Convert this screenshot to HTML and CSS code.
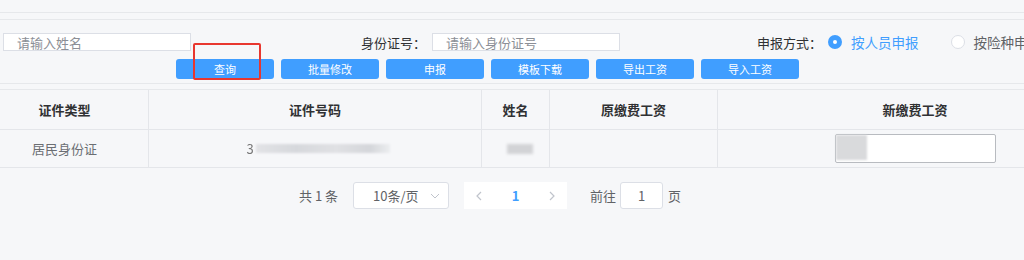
FILE: index.html
```html
<!DOCTYPE html>
<html lang="zh-CN">
<head>
    <meta charset="UTF-8">
    <meta name="viewport" content="width=device-width, initial-scale=1.0">
    <title>缴费工资调整</title>
    <link rel="stylesheet" href="styles.css">
</head>
<body>
    <div class="page">
        <div class="top-strip"></div>
        <div class="top-gap"></div>

        <div class="filters">
            <div class="filter-row">
                <input type="text" class="text-input name-input" placeholder="请输入姓名">
                <div class="field id-field">
                    <span class="field-label">身份证号：</span>
                    <input type="text" class="text-input" placeholder="请输入身份证号">
                </div>
                <div class="field type-field">
                    <span class="field-label">申报方式：</span>
                    <label class="radio checked"><span class="radio-dot"></span>按人员申报</label>
                    <label class="radio"><span class="radio-dot"></span>按险种申报</label>
                </div>
            </div>
            <div class="button-row">
                <button class="btn">查询</button>
                <button class="btn">批量修改</button>
                <button class="btn">申报</button>
                <button class="btn">模板下载</button>
                <button class="btn">导出工资</button>
                <button class="btn">导入工资</button>
            </div>
            <div class="highlight-box"></div>
        </div>
        <div class="mid-gap"></div>

        <div class="table-wrap">
            <table class="data-table">
                <thead>
                    <tr>
                        <th class="col-type">证件类型</th>
                        <th class="col-no">证件号码</th>
                        <th class="col-name">姓名</th>
                        <th class="col-old">原缴费工资</th>
                        <th class="col-new">新缴费工资</th>
                    </tr>
                </thead>
                <tbody>
                    <tr>
                        <td>居民身份证</td>
                        <td><span class="blur-no"><span class="blur-first">3</span><span class="blur-bar"></span></span></td>
                        <td><span class="blur-name"></span></td>
                        <td></td>
                        <td>
                            <div class="salary-input">
                                <span class="blur-salary"></span>
                            </div>
                        </td>
                    </tr>
                </tbody>
            </table>
        </div>

        <div class="pagination">
            <span class="total">共 1 条</span>
            <div class="page-size">
                <span>10条/页</span>
                <svg class="arrow-down" width="10" height="6" viewBox="0 0 10 6">
                    <path d="M1 1 L5 5 L9 1" fill="none" stroke="#c0c4cc" stroke-width="1"/>
                </svg>
            </div>
            <div class="pager">
                <span class="pager-btn">
                    <svg width="6" height="10" viewBox="0 0 6 10"><path d="M5 1 L1 5 L5 9" fill="none" stroke="#c0c4cc" stroke-width="1.2"/></svg>
                </span>
                <span class="pager-num">1</span>
                <span class="pager-btn">
                    <svg width="6" height="10" viewBox="0 0 6 10"><path d="M1 1 L5 5 L1 9" fill="none" stroke="#c0c4cc" stroke-width="1.2"/></svg>
                </span>
            </div>
            <span class="jump-label">前往</span>
            <div class="jump-input">1</div>
            <span class="jump-label">页</span>
        </div>
    </div>
</body>
</html>
```

FILE: styles.css
```css
body {
    margin: 0;
    background-color: #f6f7f9;
    font-family: "Noto Sans CJK SC", "Noto Sans", sans-serif;
    color: #333;
    overflow: hidden;
}
.page {
    width: 1024px;
    overflow: hidden;
}
.top-strip {
    height: 12px;
    border-bottom: 1px solid #e6e8eb;
}
.top-gap {
    height: 6px;
    border-bottom: 1px solid #e6e8eb;
}
.filters {
    position: relative;
    padding: 13px 0 4px 0;
    border-bottom: 1px solid #e6e8eb;
}
.filter-row {
    display: flex;
    align-items: center;
    height: 18px;
    white-space: nowrap;
}
.filter-row > *,
.field > * {
    flex-shrink: 0;
}
.text-input {
    box-sizing: border-box;
    width: 188px;
    height: 18px;
    padding: 0 0 0 13px;
    border: 1px solid #dcdfe6;
    background: white;
    font-family: inherit;
    font-size: 13px;
    color: #606266;
    outline: none;
}
.text-input::placeholder {
    color: #8c8f96;
}
.name-input {
    margin-left: 3px;
}
.field {
    display: flex;
    align-items: center;
}
.field-label {
    font-size: 13px;
    color: #303133;
    margin-right: 6px;
}
.id-field {
    margin-left: 170px;
}
.type-field {
    margin-left: 137px;
}
.radio {
    display: flex;
    align-items: center;
    font-size: 13.5px;
    color: #606266;
    margin-right: 32px;
}
.radio-dot {
    box-sizing: border-box;
    width: 14px;
    height: 14px;
    border-radius: 50%;
    border: 1px solid #dcdfe6;
    background: white;
    margin-right: 9px;
}
.radio.checked {
    color: #409eff;
}
.radio.checked .radio-dot {
    border: 5px solid #409eff;
    background: white;
}
.button-row {
    display: flex;
    gap: 7px;
    margin-top: 8px;
    margin-left: 176px;
}
.btn {
    width: 98px;
    height: 20px;
    padding: 0;
    border: none;
    border-radius: 3px;
    background-color: #409eff;
    color: white;
    font-family: inherit;
    font-size: 11px;
    line-height: 20px;
}
.highlight-box {
    position: absolute;
    left: 193px;
    top: 23px;
    width: 64px;
    height: 33px;
    border: 2px solid #e8372f;
    border-radius: 2px;
}
.mid-gap {
    height: 5px;
    border-bottom: 1px solid #e6e8eb;
}
.table-wrap {
    margin-left: -19px;
    width: 1132px;
}
.data-table {
    border-collapse: collapse;
    table-layout: fixed;
    width: 1132px;
}
.data-table th,
.data-table td {
    border-right: 1px solid #e4e6ea;
    border-bottom: 1px solid #e4e6ea;
    text-align: center;
    padding: 0;
}
.data-table th {
    height: 39px;
    font-size: 13px;
    font-weight: bold;
    color: #303133;
}
.data-table td {
    height: 37px;
    font-size: 13px;
    color: #6b6e73;
}
.col-type { width: 167px; }
.col-no { width: 332px; }
.col-name { width: 67px; }
.col-old { width: 167px; }
.col-new { width: 394px; }
.blur-no {
    display: inline-flex;
    align-items: center;
    margin-left: 6px;
}
.blur-first {
    color: #777;
    filter: blur(0.6px);
    margin-right: 2px;
}
.blur-bar {
    display: inline-block;
    width: 134px;
    height: 9px;
    background: linear-gradient(90deg, #e2e3e6, #d6d8dc 30%, #e0e1e4 60%, #d4d6da 85%, #eceef0);
    filter: blur(1px);
}
.blur-name {
    display: inline-block;
    width: 26px;
    height: 10px;
    margin-left: 8px;
    background: #d2d3d6;
    filter: blur(1.5px);
}
.salary-input {
    box-sizing: border-box;
    width: 161px;
    height: 29px;
    margin: 0 auto;
    border: 1px solid #b8bbc0;
    border-radius: 2px;
    background: white;
    text-align: left;
}
.blur-salary {
    display: block;
    width: 31px;
    height: 25px;
    background: #d9dadc;
    filter: blur(1px);
}
.pagination {
    display: flex;
    align-items: center;
    margin-top: 14px;
    padding-left: 299px;
    font-size: 13px;
    color: #606266;
}
.total {
    margin-right: 15px;
}
.page-size {
    box-sizing: border-box;
    display: flex;
    align-items: center;
    justify-content: space-between;
    width: 96px;
    height: 27px;
    padding: 0 8px 0 19px;
    border: 1px solid #dcdfe6;
    border-radius: 3px;
    background: white;
    margin-right: 15px;
}
.pager {
    display: flex;
    align-items: center;
    height: 27px;
    background: white;
    margin-right: 23px;
}
.pager-btn {
    display: flex;
    align-items: center;
    justify-content: center;
    width: 30px;
    height: 27px;
}
.pager-num {
    width: 43px;
    text-align: center;
    color: #409eff;
    font-weight: bold;
}
.jump-input {
    box-sizing: border-box;
    width: 43px;
    height: 27px;
    margin: 0 5px 0 4px;
    border: 1px solid #dcdfe6;
    border-radius: 3px;
    background: white;
    text-align: center;
    line-height: 25px;
}
```
